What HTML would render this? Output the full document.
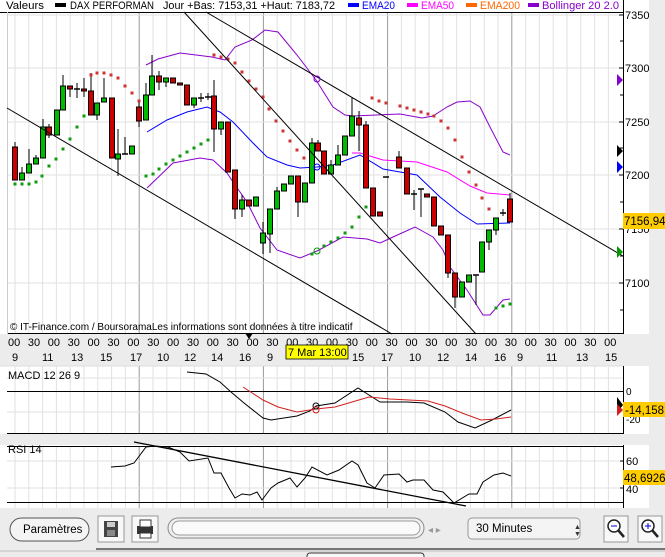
<!DOCTYPE html>
<html><head><meta charset="utf-8">
<style>
html,body{margin:0;padding:0;background:#ececec;width:665px;height:557px;overflow:hidden;font-family:"Liberation Sans",sans-serif}
svg{position:absolute;left:0;top:0}
text{font-family:"Liberation Sans",sans-serif}
</style></head>
<body>
<svg id="s" width="665" height="557" xmlns="http://www.w3.org/2000/svg">
<rect x="0" y="0" width="665" height="557" fill="#ececec"/>
<rect x="0" y="0" width="649" height="334" fill="#fff"/>
<rect x="0" y="366" width="649" height="68" fill="#fff"/>
<rect x="0" y="445" width="649" height="63" fill="#fff"/>
<g id="grid"></g>
<g font-size="11" fill="#000">
<text x="6" y="9" textLength="38" lengthAdjust="spacingAndGlyphs">Valeurs</text>
<rect x="55" y="3" width="11" height="4" fill="#000"/>
<text x="70" y="9" textLength="84" lengthAdjust="spacingAndGlyphs">DAX PERFORMAN</text>
<text x="163" y="9" textLength="172" lengthAdjust="spacingAndGlyphs">Jour +Bas: 7153,31 +Haut: 7183,72</text>
<rect x="348" y="3" width="11" height="4" fill="#0000ff"/><text x="362" y="9" fill="#0000ff" textLength="33" lengthAdjust="spacingAndGlyphs">EMA20</text>
<rect x="407" y="3" width="11" height="4" fill="#ff00ff"/><text x="421" y="9" fill="#ff00ff" textLength="33" lengthAdjust="spacingAndGlyphs">EMA50</text>
<rect x="466" y="3" width="11" height="4" fill="#ff6600"/><text x="480" y="9" fill="#ff6600" textLength="40" lengthAdjust="spacingAndGlyphs">EMA200</text>
<rect x="528" y="3" width="11" height="4" fill="#8800cc"/><text x="542" y="9" fill="#8800cc" textLength="77" lengthAdjust="spacingAndGlyphs">Bollinger 20 2.0</text>
</g>
<line x1="0" y1="12.5" x2="623" y2="12.5" stroke="#000" stroke-width="1"/>
<line x1="623.5" y1="0" x2="623.5" y2="334" stroke="#000"/>
<line x1="7" y1="333.5" x2="623" y2="333.5" stroke="#000"/>
<line x1="7.5" y1="12" x2="7.5" y2="334" stroke="#ccc"/>
<g font-size="11" fill="#000">
<text x="625" y="19">7350</text><text x="625" y="72">7300</text><text x="625" y="126">7250</text>
<text x="625" y="179">7200</text><text x="625" y="233">7150</text><text x="625" y="287">7100</text>
</g>
<g id="ticks" stroke="#000"></g>
<g id="bands" fill="none"></g>
<g id="candles"></g>
<g id="dots"></g>
<g stroke="#000" stroke-width="1" fill="none">
<line x1="7" y1="108" x2="392" y2="334"/>
<line x1="184" y1="12" x2="476" y2="334"/>
<line x1="206" y1="12" x2="623" y2="256"/>
</g>
<circle cx="317" cy="79" r="3" fill="none" stroke="#8800cc"/>
<circle cx="317" cy="251" r="3" fill="none" stroke="#009900"/>
<circle cx="317" cy="167" r="3" fill="none" stroke="#0000ff"/>
<polygon points="617,74 617,86 623,80" fill="#8800cc"/>
<polygon points="617,145 617,157 623,151" fill="#000"/>
<polygon points="617,161 617,173 623,167" fill="#0000ff"/>
<polygon points="617,246 617,258 623,252" fill="#009900"/>
<rect x="623" y="213" width="42" height="16" fill="#ffcc00"/>
<text x="624" y="225" font-size="11.5">7156,94</text>
<text x="10" y="330" font-size="10">© IT-Finance.com / BoursoramaLes informations sont données à titre indicatif</text>
<polygon points="245,333 253,333 249,339" fill="#000"/>
<g id="taxis" font-size="11" fill="#000"></g>
<rect x="286" y="345" width="62" height="14" fill="#ffff00" stroke="#000" stroke-width="0.8"/>
<text x="288" y="356" font-size="11">7 Mar 13:00</text>
<line x1="0" y1="366" x2="623" y2="366" stroke="#ddd"/>
<line x1="7" y1="391.5" x2="623" y2="391.5" stroke="#000"/>
<line x1="7" y1="433.5" x2="623" y2="433.5" stroke="#000"/>
<line x1="623.5" y1="366" x2="623.5" y2="434" stroke="#000"/>
<text x="8" y="379" font-size="11">MACD 12 26 9</text>
<text x="626" y="395" font-size="10">0</text>
<text x="626" y="423" font-size="10">-20</text>
<polyline fill="none" stroke="#000" stroke-width="1" points="187,372 206,374 220,382 231,392 244,403 263,418 271,420 297,416 310,411 316,406 335,403 358,388 369,395 380,402 407,402 424,403 445,412 458,422 475,428 492,420 511,410"/>
<polyline fill="none" stroke="#d02020" stroke-width="1" points="243,387 263,400 278,407 297,412 316,409 335,407 352,402 369,397 390,399 428,401 445,406 462,413 481,420 496,419 511,417"/>
<circle cx="316" cy="406" r="3" fill="none" stroke="#000"/>
<circle cx="316" cy="410" r="3" fill="none" stroke="#d02020"/>
<polygon points="617,397 617,413 623,405" fill="#000"/>
<polygon points="617,404 617,416 623,410" fill="#d02020"/>
<rect x="623" y="402" width="42" height="15" fill="#ffcc00"/>
<text x="625" y="414" font-size="11.5">-14,158</text>
<line x1="7" y1="446.5" x2="623" y2="446.5" stroke="#000"/>
<line x1="7" y1="502.5" x2="623" y2="502.5" stroke="#000"/>
<line x1="623.5" y1="445" x2="623.5" y2="508" stroke="#000"/>
<text x="8" y="453" font-size="11">RSI 14</text>
<text x="626" y="465" font-size="11">60</text>
<text x="626" y="493" font-size="11">40</text>
<line x1="620" y1="461" x2="624" y2="461" stroke="#000"/><line x1="620" y1="488" x2="624" y2="488" stroke="#000"/>
<rect x="623" y="470" width="42" height="15" fill="#ffcc00"/>
<text x="624" y="482" font-size="11.5">48,6926</text>
<polyline fill="none" stroke="#000" stroke-width="1" points="111,467 125,466 134,463 146,447 155,446 168,447 180,452 189,461 208,458 214,473 221,473 229,488 235,498 242,494 250,495 257,492 262,500 271,488 278,483 290,478 297,487 305,478 312,467 327,475 339,470 352,461 358,465 367,483 375,488 384,475 399,474 407,482 413,480 424,480 433,490 443,492 454,503 469,494 477,494 483,482 494,475 503,473 511,476"/>
<line x1="134" y1="442" x2="466" y2="506" stroke="#000" stroke-width="1.3"/>
<rect x="10" y="518" width="79" height="23" rx="11.5" fill="#f4f4f4" stroke="#555"/>
<text x="23" y="533" font-size="11.5">Paramètres</text>
<rect x="98" y="516" width="26" height="26" fill="#f8f8f8" stroke="#999"/>
<rect x="104" y="521" width="14" height="16" fill="#444"/><rect x="107" y="522" width="8" height="5" fill="#ccc"/><rect x="107" y="530" width="8" height="6" fill="#888"/>
<rect x="132" y="516" width="26" height="26" fill="#f8f8f8" stroke="#999"/>
<rect x="137" y="526" width="16" height="8" fill="#333"/><rect x="140" y="520" width="11" height="7" fill="#fff" stroke="#333"/><rect x="140" y="533" width="11" height="5" fill="#fff" stroke="#333"/>
<rect x="168" y="518" width="256" height="20" rx="10" fill="#f0f0f0" stroke="#888"/>
<rect x="172" y="521" width="248" height="14" rx="7" fill="#fafafa" stroke="#999"/>
<text x="428" y="533" font-size="10" fill="#999">◂ ▸</text>
<rect x="468" y="518" width="112" height="21" rx="4" fill="#f4f4f4" stroke="#999"/>
<text x="476" y="532" font-size="11.5">30 Minutes</text>
<text x="574" y="529" font-size="7" fill="#333">▲</text><text x="574" y="536" font-size="7" fill="#333">▼</text>
<rect x="604" y="516" width="24" height="26" fill="#f8f8f8" stroke="#999"/>
<circle cx="614" cy="526" r="6" fill="#fff" stroke="#222" stroke-width="1.5"/><line x1="618" y1="530" x2="624" y2="537" stroke="#222" stroke-width="2.5"/><line x1="611" y1="526" x2="617" y2="526" stroke="#00c"/>
<rect x="638" y="516" width="24" height="26" fill="#f8f8f8" stroke="#999"/>
<circle cx="648" cy="526" r="6" fill="#fff" stroke="#222" stroke-width="1.5"/><line x1="652" y1="530" x2="658" y2="537" stroke="#222" stroke-width="2.5"/><line x1="645" y1="526" x2="651" y2="526" stroke="#00c"/><line x1="648" y1="523" x2="648" y2="529" stroke="#00c"/>
<line x1="96" y1="549" x2="665" y2="549" stroke="#000"/>
<line x1="0" y1="551" x2="665" y2="551" stroke="#bbb"/>
<rect x="307" y="553" width="117" height="8" rx="3" fill="#f8f8f8" stroke="#333"/>
</svg>
<script>
var NS="http://www.w3.org/2000/svg";
function el(p,t,a){var e=document.createElementNS(NS,t);for(var k in a)e.setAttribute(k,a[k]);document.getElementById(p).appendChild(e);return e;}
for(var k=0;k<=44;k++){var x=15+13.8*k;if(x>622)break;var dark=(k%9==0&&k>0);
 [[13,333],[366,434],[446,508]].forEach(function(r){el('grid','line',{x1:x,y1:r[0],x2:x,y2:r[1],stroke:dark?'#999':'#e2e2e2','stroke-width':1});});}
[15,68,122,175,229,283].forEach(function(y){el('grid','line',{x1:7,y1:y,x2:623,y2:y,stroke:'#e2e2e2'});el('ticks','line',{x1:619,y1:y,x2:624,y2:y});});
[41,95,148,202,256,310].forEach(function(y){el('ticks','line',{x1:620,y1:y,x2:624,y2:y});});
[461,488].forEach(function(y){el('grid','line',{x1:7,y1:y,x2:623,y2:y,stroke:'#e2e2e2'});});
[378,412].forEach(function(y){el('grid','line',{x1:7,y1:y,x2:623,y2:y,stroke:'#e2e2e2'});});
var days=["9","11","13","15","17","10","12","14","16","9","","","15","17","10","12","14","16","9","11","13","15"];
for(var i=0;i<31;i++){var t=document.createElementNS(NS,'text');t.setAttribute('x',8+i*19.87);t.setAttribute('y',346);t.textContent=(i%2?"30":"00");document.getElementById('taxis').appendChild(t);}
var dx=[15,45,74,103,133,160,187,214,242,270,0,0,355,384,412,440,468,497,520,549,579,608];
for(var i=0;i<days.length;i++){if(!days[i])continue;var t=document.createElementNS(NS,'text');t.setAttribute('x',dx[i]-3);t.setAttribute('y',361);t.textContent=days[i];document.getElementById('taxis').appendChild(t);}
function pl(pts,c){el('bands','polyline',{points:pts,stroke:c,'stroke-width':1});}
pl("146,65 158,59 180,53 212,57 225,60 235,47 252,40 265,30 278,32 297,55 316,80 333,107 345,115 353,116 400,114 422,118 433,116 447,107 457,102 470,101 480,107 490,127 503,152 510,155","#8800cc");
pl("147,188 173,163 200,158 213,160 227,173 233,182 247,202 260,228 277,250 300,258 317,251 343,237 367,239 380,243 393,237 415,227 433,237 443,250 450,267 467,290 483,315 490,315 503,300 510,299","#8800cc");
pl("147,132 167,120 187,112 207,107 220,112 233,122 253,143 267,157 287,165 300,168 317,167 333,165 360,155 383,169 417,175 440,197 460,213 477,224 510,223","#0000ff");
pl("352,153 360,153 383,160 417,162 447,172 470,186 487,193 510,195","#ff00ff");
var C=[[15,147,180,142,180],[22,180,173,167,180],[29,173,164,149,173],[36,164,158,155,164],[43,158,127,119,158],[49,127,135,124,138],[57,135,110,110,135],[63,110,86,75,110],[70,86,89,86,97],[77,89,89,83,98],[84,89,91,78,97],[91,91,115,73,115],[97,115,103,103,120],[104,102,98,78,102],[112,98,158,98,158],[118,159,154,129,176],[125,154,154,137,154],[132,154,146,146,154],[139,107,121,102,127],[146,120,95,83,120],[152,95,76,55,95],[159,76,82,71,90],[166,82,78,78,87],[173,78,83,78,83],[180,83,85,83,85],[187,85,105,85,105],[194,105,98,98,108],[201,98,98,93,102],[208,97,97,93,100],[214,96,129,80,152],[221,129,122,122,135],[228,122,172,122,172],[235,170,209,170,219],[242,209,200,195,217],[249,200,206,200,206],[256,206,197,197,206],[263,243,233,222,254],[270,234,209,209,253],[277,209,191,187,209],[284,191,184,184,191],[291,184,176,176,184],[298,176,202,176,217],[305,202,183,183,202],[312,183,143,138,183],[318,143,151,140,151],[324,151,174,151,174],[331,174,165,160,174],[338,165,155,145,165],[345,155,136,136,155],[352,136,116,98,136],[359,118,125,111,151],[366,125,188,121,188],[373,188,216,188,216],[380,212,216,212,216],[386,177,177,177,177],[399,157,168,151,168],[407,168,194,168,194],[414,194,193,190,210],[421,189,189,189,217],[427,194,197,194,197],[434,197,226,197,226],[441,226,235,226,235],[448,235,273,235,278],[455,273,297,273,308],[462,297,282,282,297],[469,282,275,275,282],[476,275,275,275,305],[482,272,242,242,272],[489,242,230,230,250],[496,230,218,218,235],[503,213,213,209,216],[510,199,222,193,222]];
C.forEach(function(c){var x=c[0],o=c[1],cl=c[2],h=c[3],l=c[4];
 el('candles','line',{x1:x,y1:Math.min(h,o,cl),x2:x,y2:Math.max(l,o,cl),stroke:'#000'});
 var top=Math.min(o,cl),ht=Math.abs(o-cl);
 if(ht<1.5){el('candles','line',{x1:x-3,y1:o,x2:x+3,y2:o,stroke:'#000','stroke-width':1.5});}
 else el('candles','rect',{x:x-2.5,y:top,width:5,height:ht,fill:(cl>o?'#cc0000':'#00bb00'),stroke:'#000','stroke-width':1});});
var R=[[91,75],[97,73],[104,73],[111,75],[118,78],[125,86],[132,93],[139,101],[214,55],[221,57],[228,59],[235,63],[242,72],[249,81],[256,89],[263,97],[269,109],[276,121],[283,131],[290,141],[297,150],[304,158],[372,98],[379,101],[386,103],[400,106],[407,108],[414,110],[421,112],[428,114],[434,116],[441,121],[448,128],[455,140],[462,157],[469,172],[476,185],[482,198],[489,209]];
var G=[[15,184],[22,184],[29,184],[36,182],[42,176],[49,166],[56,159],[63,149],[70,139],[77,127],[84,116],[146,176],[153,174],[159,169],[166,164],[173,160],[180,156],[187,152],[194,148],[201,144],[208,140],[312,254],[324,246],[331,242],[338,238],[345,233],[352,227],[359,217],[366,207],[496,308],[503,306],[510,304]];
R.forEach(function(p){el('dots','rect',{x:p[0]-1.5,y:p[1]-1.5,width:3,height:3,fill:'#cc3333'});});
G.forEach(function(p){el('dots','rect',{x:p[0]-1.5,y:p[1]-1.5,width:3,height:3,fill:'#119911'});});
</script>
</body></html>
